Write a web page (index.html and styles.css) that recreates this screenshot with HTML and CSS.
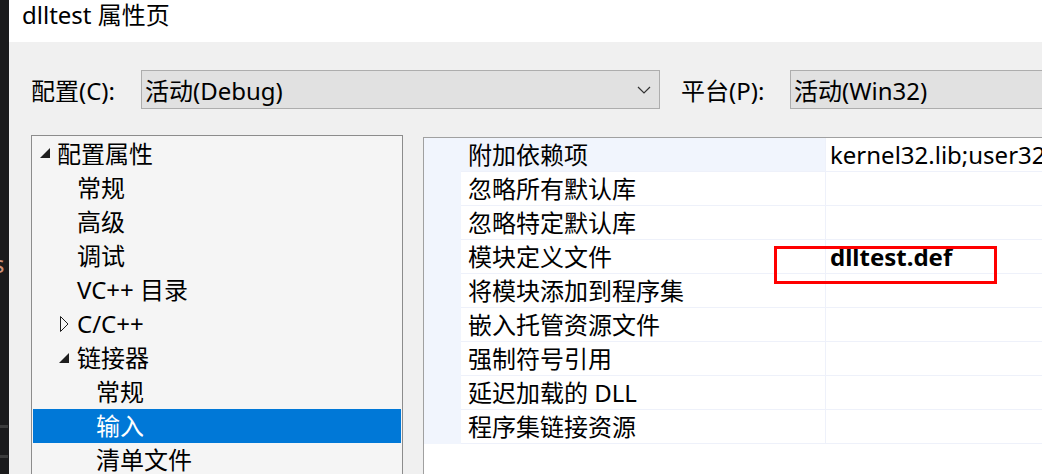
FILE: index.html
```html
<!DOCTYPE html>
<html lang="zh-CN">
<head>
<meta charset="utf-8">
<title>dlltest 属性页</title>
<link rel="stylesheet" href="styles.css">
</head>
<body>
<div class="strip">
  <span class="strip-s">s</span>
  <span class="strip-mark first"></span>
  <span class="strip-mark second"></span>
</div>
<div class="window">
  <div class="titlebar">dlltest 属性页</div>
  <div class="config">
    <span class="label">配置(C):</span>
    <div class="combo combo-config">
      <span class="combo-text">活动(Debug)</span>
      <svg class="chevron" width="14" height="8" viewBox="0 0 14 8"><path d="M1 1 L7 7 L13 1" fill="none" stroke="#333" stroke-width="1.2"/></svg>
    </div>
    <span class="label label-platform">平台(P):</span>
    <div class="combo combo-platform">
      <span class="combo-text">活动(Win32)</span>
    </div>
  </div>
  <div class="main">
    <div class="tree">
      <div class="node l0"><span class="tog"><svg width="13" height="11" viewBox="0 0 13 11"><polygon points="12,0 12,10 2,10" fill="#1e1e1e"/></svg></span><span>配置属性</span></div>
      <div class="node l1"><span class="tog"></span><span>常规</span></div>
      <div class="node l1"><span class="tog"></span><span>高级</span></div>
      <div class="node l1"><span class="tog"></span><span>调试</span></div>
      <div class="node l1"><span class="tog"></span><span>VC++ 目录</span></div>
      <div class="node l1"><span class="tog"><svg width="11" height="16" viewBox="0 0 11 16"><polygon points="2.5,0.5 10,8 2.5,15.5" fill="none" stroke="#1e1e1e" stroke-width="1"/></svg></span><span>C/C++</span></div>
      <div class="node l1"><span class="tog"><svg width="13" height="11" viewBox="0 0 13 11"><polygon points="11,0 11,10 1,10" fill="#1e1e1e"/></svg></span><span>链接器</span></div>
      <div class="node l2"><span class="tog"></span><span>常规</span></div>
      <div class="node l2 selected"><span class="tog"></span><span>输入</span></div>
      <div class="node l2"><span class="tog"></span><span>清单文件</span></div>
    </div>
    <div class="grid">
      <div class="row active"><span class="gutter"></span><span class="name">附加依赖项</span><span class="value">kernel32.lib;user32.lib;gdi32.lib;winspool.lib</span></div>
      <div class="row"><span class="gutter"></span><span class="name">忽略所有默认库</span><span class="value"></span></div>
      <div class="row"><span class="gutter"></span><span class="name">忽略特定默认库</span><span class="value"></span></div>
      <div class="row"><span class="gutter"></span><span class="name">模块定义文件</span><span class="value bold">dlltest.def</span></div>
      <div class="row"><span class="gutter"></span><span class="name">将模块添加到程序集</span><span class="value"></span></div>
      <div class="row"><span class="gutter"></span><span class="name">嵌入托管资源文件</span><span class="value"></span></div>
      <div class="row"><span class="gutter"></span><span class="name">强制符号引用</span><span class="value"></span></div>
      <div class="row"><span class="gutter"></span><span class="name">延迟加载的 DLL</span><span class="value"></span></div>
      <div class="row"><span class="gutter"></span><span class="name">程序集链接资源</span><span class="value"></span></div>
      <div class="highlight"></div>
    </div>
  </div>
</div>
</body>
</html>
```

FILE: styles.css
```css
html, body {
  margin: 0;
  padding: 0;
  height: 100%;
  overflow: hidden;
}
body {
  display: flex;
  background: #1e1e1e;
  font-family: "Noto Sans", "Noto Sans CJK SC", sans-serif;
  font-size: 24px;
  color: #000;
}
.strip {
  width: 9px;
  flex: none;
  display: flex;
  flex-direction: column;
  overflow: hidden;
  background: #1b1b1c;
}
.strip-s {
  margin-top: 250px;
  margin-left: -7px;
  height: 28px;
  line-height: 28px;
  font-size: 24px;
  color: #ce9178;
}
.strip-mark {
  display: block;
  height: 3px;
  width: 8px;
  background: #3c3c3c;
}
.strip-mark.first { margin-top: 147px; }
.strip-mark.second { margin-top: 27px; }

.window {
  flex: 1;
  min-width: 0;
  background: #f0f0f0;
  display: flex;
  flex-direction: column;
  overflow: hidden;
}
.titlebar {
  height: 42px;
  flex: none;
  background: #fff;
  padding-left: 13px;
  line-height: 30px;
  font-size: 24px;
  white-space: nowrap;
}
.config {
  display: flex;
  align-items: center;
  height: 39px;
  margin-top: 28px;
  padding-left: 22px;
  flex: none;
  white-space: nowrap;
}
.label {
  width: 110px;
  flex: none;
}
.label-platform {
  width: 109px;
  margin-left: 21px;
}
.combo {
  box-sizing: border-box;
  height: 39px;
  border: 1px solid #adadad;
  background: #e1e1e1;
  display: flex;
  align-items: center;
  padding-left: 3px;
  flex: none;
}
.combo-config {
  width: 519px;
  justify-content: space-between;
  padding-right: 8px;
}
.combo-platform {
  width: 400px;
}
.chevron {
  display: block;
}
.main {
  display: flex;
  margin-top: 26px;
  padding-left: 22px;
  flex: 1;
  min-height: 0;
  align-items: flex-start;
}
.tree {
  box-sizing: border-box;
  width: 372px;
  height: 400px;
  flex: none;
  border: 1px solid #8c8c8c;
  background: #f5f5f5;
  padding: 1px 1px 0 1px;
}
.node {
  display: flex;
  align-items: center;
  height: 34px;
  line-height: 34px;
  white-space: nowrap;
}
.node.l0 { padding-left: 5px; }
.node.l1 { padding-left: 25px; }
.node.l2 { padding-left: 44px; }
.tog {
  width: 19px;
  flex: none;
  display: flex;
  align-items: center;
  height: 34px;
}
.tog svg { display: block; }
.l0 .tog svg { margin-top: -2px; }
.selected {
  background: #0078d7;
  color: #fff;
}
.grid {
  position: relative;
  flex: 1;
  min-width: 0;
  height: 400px;
  margin-left: 20px;
  margin-top: 2px;
  border-left: 1px solid #a0a0a0;
  border-top: 1px solid #a0a0a0;
  background: #fff;
  overflow: hidden;
}
.row {
  display: flex;
  height: 34px;
  line-height: 33px;
  white-space: nowrap;
}
.gutter {
  width: 37px;
  flex: none;
  background: #f1f5fd;
}
.name {
  box-sizing: border-box;
  width: 365px;
  flex: none;
  padding-left: 7px;
  border-bottom: 1px solid #eef1fa;
  border-right: 1px solid #eef1fa;
}
.value {
  flex: 1;
  padding-left: 4px;
  border-bottom: 1px solid #eef1fa;
  overflow: hidden;
}
.row.active .name {
  background: #f1f5fd;
}
.bold {
  font-weight: bold;
}
.highlight {
  position: absolute;
  left: 350px;
  top: 108px;
  width: 223px;
  height: 38px;
  box-sizing: border-box;
  border: 3px solid #ff0000;
}
```
